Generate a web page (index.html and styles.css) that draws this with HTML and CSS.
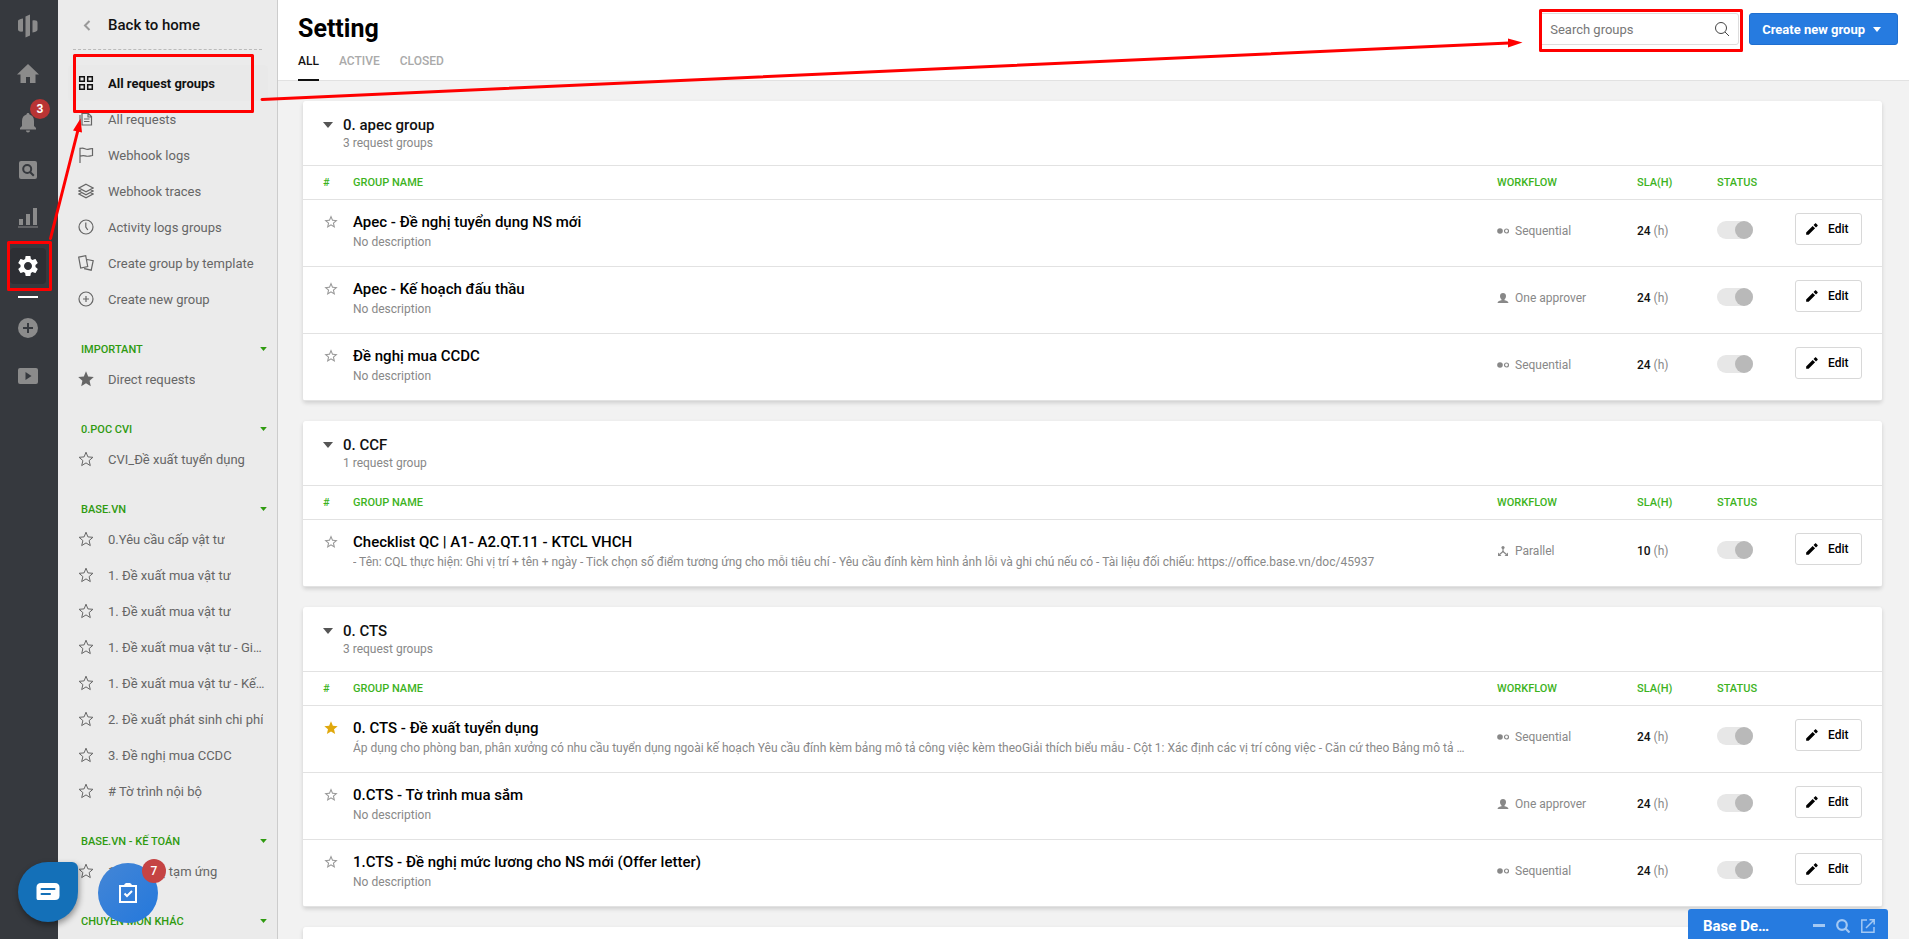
FILE: index.html
```html
<!DOCTYPE html>
<html lang="vi">
<head>
    <meta charset="UTF-8">
    <meta name="viewport" content="width=device-width, initial-scale=1.0">
    <title>Setting - Request groups</title>
    <link rel="stylesheet" href="styles.css">
</head>
<body>
    <!-- Icons -->
    <svg class="sprite" aria-hidden="true">
        <symbol id="i-star" viewBox="0 0 16 16"><path d="M8 1.2l1.9 4.7 5 .4-3.8 3.3 1.2 5L8 11.900l-4.300 2.700 1.200-5L1.100 6.300l5-.4z" fill="none" stroke="currentColor" stroke-width="1"/></symbol>
        <symbol id="i-star-fill" viewBox="0 0 16 16"><path d="M8 .3l2.200 5.200 5.600.5-4.200 3.700 1.200 5.500L8 12.300l-4.800 2.900 1.200-5.500L.2 6l5.600-.5z" fill="currentColor"/></symbol>
        <symbol id="i-star-sm" viewBox="0 0 24 24"><path d="M22 9.240l-7.190-.62L12 2 9.190 8.630 2 9.240l5.460 4.730L5.820 21 12 17.270 18.180 21l-1.630-7.030L22 9.240zM12 15.400l-3.760 2.270 1-4.280-3.320-2.880 4.380-.38L12 6.100l1.710 4.040 4.380.38-3.320 2.880 1 4.280L12 15.400z" fill="currentColor"/></symbol>
        <symbol id="i-star-sm-fill" viewBox="0 0 24 24"><path d="M12 17.270L18.180 21l-1.640-7.030L22 9.240l-7.190-.61L12 2 9.190 8.630 2 9.240l5.460 4.730L5.820 21z" fill="currentColor"/></symbol>
        <symbol id="i-caret" viewBox="0 0 10 6"><path d="M0 0h10L5 6z" fill="currentColor"/></symbol>
        <symbol id="i-pencil" viewBox="0 0 24 24"><path d="M2 17.800V22h4.200L17.300 10.900l-4.200-4.200zM21.500 6.700c.5-.5.5-1.200 0-1.700L19 2.500c-.5-.5-1.200-.5-1.700 0L14.600 5.200l4.200 4.200z" fill="currentColor"/></symbol>
        <symbol id="i-seq" viewBox="0 0 12 12"><circle cx="3" cy="6" r="2.800" fill="currentColor"/><circle cx="9.500" cy="6" r="2" fill="none" stroke="currentColor" stroke-width="1.200"/></symbol>
        <symbol id="i-one" viewBox="0 0 12 12"><path d="M6 1c1.800 0 3 1.200 3 3 0 1.500-.6 2.700-1.500 3.400v.8c1.500.4 3.800.9 4 2.800H.5c.2-1.900 2.500-2.400 4-2.800v-.8C3.600 6.700 3 5.500 3 4c0-1.800 1.200-3 3-3z" fill="currentColor"/></symbol>
        <symbol id="i-par" viewBox="0 0 12 12"><path d="M6 3v3.500M6 6.500L2.500 9.500M6 6.500l3.500 3" fill="none" stroke="currentColor" stroke-width="1.200"/><circle cx="6" cy="2.500" r="1.600" fill="currentColor"/><path d="M1 7.500V11h3.500zM11 7.500V11H7.500z" fill="currentColor"/></symbol>
    </svg>

    <div class="app">
        <!-- Dark rail -->
        <nav class="rail">
            <a href="#" aria-label="Base">
                <svg width="20" height="24" viewBox="0 0 20 24" fill="currentColor"><path d="M0 7.500c0-1.500 1-2.200 5-3v13c-3.500.5-5-.5-5-2zM7.500 2.500L12 .500v21l-4.500 2zM14.500 6.500c3.500-.5 5 .3 5 2v7c0 1.500-1.200 2.200-5 3z"/></svg>
            </a>
            <a href="#" aria-label="Home">
                <svg width="22" height="20" viewBox="0 0 22 20" fill="currentColor"><path d="M11 0l11 10.500h-3.500V19h-5.500v-6H9v6H3.500v-8.500H0z"/></svg>
            </a>
            <a href="#" aria-label="Notifications">
                <svg width="18" height="22" viewBox="0 0 18 22" fill="currentColor"><path d="M9 2c.9 0 1.500.7 1.500 1.600C13.500 4.400 15 6.800 15 10v5l2 2v1.500H1V17l2-2v-5c0-3.200 1.500-5.600 4.500-6.400C7.500 2.700 8.100 2 9 2zM7 19.500h4c0 1.200-.8 2-2 2s-2-.8-2-2z"/></svg>
                <span class="rail-badge">3</span>
            </a>
            <a href="#" aria-label="Search">
                <svg width="18" height="18" viewBox="0 0 18 18"><rect width="18" height="18" rx="2" fill="currentColor"/><circle cx="8.200" cy="8" r="4" fill="none" stroke="#36393e" stroke-width="2"/><path d="M11 11l3.800 3.800" stroke="#36393e" stroke-width="2"/></svg>
            </a>
            <a href="#" aria-label="Reports">
                <svg width="20" height="20" viewBox="0 0 20 20" fill="currentColor"><path d="M1 11h4v6H1zM8 6h4v11H8zM15 0h4v17h-4zM0 18.500h20v1H0z"/></svg>
            </a>
            <a href="#" class="rail-current" aria-label="Setting">
                <svg width="24" height="24" viewBox="0 0 24 24" fill="currentColor"><path d="M19.430 12.980c.04-.32.07-.64.07-.98s-.03-.66-.07-.98l2.110-1.650c.19-.15.24-.42.12-.64l-2-3.460c-.12-.22-.39-.3-.61-.22l-2.490 1c-.52-.4-1.080-.73-1.690-.98l-.38-2.650C14.460 2.180 14.250 2 14 2h-4c-.25 0-.46.18-.49.42l-.38 2.650c-.61.25-1.170.59-1.690.98l-2.490-1c-.23-.09-.49 0-.61.22l-2 3.460c-.13.22-.07.49.12.64l2.110 1.650c-.04.32-.07.65-.07.98s.03.66.07.98l-2.110 1.650c-.19.15-.24.42-.12.64l2 3.460c.12.22.39.3.61.22l2.490-1c.52.4 1.080.73 1.690.98l.38 2.650c.03.24.24.42.49.42h4c.25 0 .46-.18.49-.42l.38-2.650c.61-.25 1.170-.59 1.690-.98l2.490 1c.23.09.49 0 .61-.22l2-3.460c.12-.22.07-.49-.12-.64zM12 16c-2.210 0-4-1.790-4-4s1.790-4 4-4 4 1.790 4 4-1.790 4-4 4z"/></svg>
            </a>
            <hr class="rail-line">
            <a href="#" aria-label="Add">
                <svg width="20" height="20" viewBox="0 0 20 20"><circle cx="10" cy="10" r="10" fill="currentColor"/><path d="M10 5v10M5 10h10" stroke="#36393e" stroke-width="2"/></svg>
            </a>
            <a href="#" aria-label="Video">
                <svg width="20" height="16" viewBox="0 0 20 16"><rect width="20" height="16" rx="2" fill="currentColor"/><path d="M7.500 4l6 4-6 4z" fill="#36393e"/></svg>
            </a>
        </nav>

        <!-- Sidebar -->
        <aside class="sidebar">
            <a href="#" class="back">
                <svg width="16" height="16" viewBox="0 0 16 16" fill="none" stroke="currentColor" stroke-width="2"><path d="M10.500 4L6 8.500l4.500 4.500"/></svg>
                Back to home
            </a>
            <ul class="menu">
                <li><a href="#" class="active"><svg viewBox="0 0 16 16" fill="none" stroke="currentColor" stroke-width="1.500"><path d="M1.700 1.700h4.600v4.600H1.700zM9.700 1.700h4.600v4.600H9.700zM1.700 9.700h4.600v4.600H1.700zM9.700 9.700h4.600v4.600H9.700z"/></svg><span>All request groups</span></a></li>
                <li><a href="#"><svg viewBox="0 0 16 16" fill="none" stroke="currentColor" stroke-width="1.200"><path d="M4 2.500h6.500l3 3V14H4zM10 2.500V6h3.500M6 8h5.500M6 10.500h5.500M2 4v11.500"/></svg><span>All requests</span></a></li>
                <li><a href="#"><svg viewBox="0 0 16 16" fill="none" stroke="currentColor" stroke-width="1.200"><path d="M2 16V.8M2 1.500c4-1.600 5 1.200 8 .8 2-.3 3-.8 4.500-.8v7c-2 .2-3.500 1.200-6 .6-2.500-.7-4-.7-6.500 0"/></svg><span>Webhook logs</span></a></li>
                <li><a href="#"><svg viewBox="0 0 16 16" fill="none" stroke="currentColor" stroke-width="1.200"><path d="M8 1.200L15 5 8 8.800 1 5zM3.200 6.800L1 8l7 3.800L15 8l-2.200-1.200M3.200 9.800L1 11l7 3.800L15 11l-2.200-1.200"/></svg><span>Webhook traces</span></a></li>
                <li><a href="#"><svg viewBox="0 0 16 16" fill="none" stroke="currentColor" stroke-width="1.200"><circle cx="8" cy="8" r="7"/><path d="M7.800 3.500V8l2 3"/></svg><span>Activity logs groups</span></a></li>
                <li><a href="#"><svg viewBox="0 0 16 16" fill="none" stroke="currentColor" stroke-width="1.200"><path d="M.7 2.200L7.700.7 9.700 11.500 2.700 13zM9 4.500l6.200 1.200-2 9.500-6.500-1.500.3-1.500"/></svg><span>Create group by template</span></a></li>
                <li><a href="#"><svg viewBox="0 0 16 16" fill="none" stroke="currentColor" stroke-width="1.200"><circle cx="8" cy="8" r="7"/><path d="M8 5v6M5 8h6"/></svg><span>Create new group</span></a></li>
            </ul>

            <h4 class="menu-title">IMPORTANT <svg><use href="#i-caret"/></svg></h4>
            <ul class="menu">
                <li><a href="#"><svg><use href="#i-star-fill"/></svg><span>Direct requests</span></a></li>
            </ul>

            <h4 class="menu-title">0.POC CVI <svg><use href="#i-caret"/></svg></h4>
            <ul class="menu">
                <li><a href="#"><svg><use href="#i-star"/></svg><span>CVI_Đề xuất tuyển dụng</span></a></li>
            </ul>

            <h4 class="menu-title">BASE.VN <svg><use href="#i-caret"/></svg></h4>
            <ul class="menu">
                <li><a href="#"><svg><use href="#i-star"/></svg><span>0.Yêu cầu cấp vật tư</span></a></li>
                <li><a href="#"><svg><use href="#i-star"/></svg><span>1. Đề xuất mua vật tư</span></a></li>
                <li><a href="#"><svg><use href="#i-star"/></svg><span>1. Đề xuất mua vật tư</span></a></li>
                <li><a href="#"><svg><use href="#i-star"/></svg><span>1. Đề xuất mua vật tư - Gia công</span></a></li>
                <li><a href="#"><svg><use href="#i-star"/></svg><span>1. Đề xuất mua vật tư - Kế hoạch</span></a></li>
                <li><a href="#"><svg><use href="#i-star"/></svg><span>2. Đề xuất phát sinh chi phí</span></a></li>
                <li><a href="#"><svg><use href="#i-star"/></svg><span>3. Đề nghị mua CCDC</span></a></li>
                <li><a href="#"><svg><use href="#i-star"/></svg><span># Tờ trình nội bộ</span></a></li>
            </ul>

            <h4 class="menu-title">BASE.VN - KẾ TOÁN <svg><use href="#i-caret"/></svg></h4>
            <ul class="menu">
                <li><a href="#"><svg><use href="#i-star"/></svg><span>1. Đề nghị tạm ứng</span></a></li>
            </ul>

            <h4 class="menu-title">CHUYÊN MÔN KHÁC <svg><use href="#i-caret"/></svg></h4>
        </aside>

        <!-- Content -->
        <main class="main">
            <header class="topbar">
                <div>
                    <h1>Setting</h1>
                    <div class="tabs">
                        <a href="#" class="active">ALL</a>
                        <a href="#">ACTIVE</a>
                        <a href="#">CLOSED</a>
                    </div>
                </div>
                <div class="actions">
                    <label class="search">
                        <input type="text" placeholder="Search groups" aria-label="Search groups">
                        <svg width="16" height="16" viewBox="0 0 16 16" fill="none" stroke="#444"><circle cx="7" cy="7" r="5.500"/><path d="M11 11l4 4"/></svg>
                    </label>
                    <button class="btn-create">Create new group <svg width="8" height="5"><use href="#i-caret"/></svg></button>
                </div>
            </header>

            <div class="groups">
                <section class="card">
                    <div class="card-head">
                        <svg><use href="#i-caret"/></svg>
                        <div>
                            <h2>0. apec group</h2>
                            <p>3 request groups</p>
                        </div>
                    </div>
                    <table>
                        <thead>
                            <tr><th class="c-star">#</th><th class="c-name">GROUP NAME</th><th class="c-flow">WORKFLOW</th><th class="c-sla">SLA(H)</th><th class="c-status">STATUS</th><th class="c-edit"></th></tr>
                        </thead>
                        <tbody>
                            <tr>
                                <td class="c-star"><svg><use href="#i-star-sm"/></svg></td>
                                <td class="c-name"><h3>Apec - Đề nghị tuyển dụng NS mới</h3><p>No description</p></td>
                                <td class="c-flow"><span><svg><use href="#i-seq"/></svg>Sequential</span></td>
                                <td class="c-sla"><b>24</b> (h)</td>
                                <td class="c-status"><input type="checkbox" class="toggle" aria-label="Status" checked></td>
                                <td class="c-edit"><button class="btn-edit"><svg><use href="#i-pencil"/></svg>Edit</button></td>
                            </tr>
                            <tr>
                                <td class="c-star"><svg><use href="#i-star-sm"/></svg></td>
                                <td class="c-name"><h3>Apec - Kế hoạch đấu thầu</h3><p>No description</p></td>
                                <td class="c-flow"><span><svg><use href="#i-one"/></svg>One approver</span></td>
                                <td class="c-sla"><b>24</b> (h)</td>
                                <td class="c-status"><input type="checkbox" class="toggle" aria-label="Status" checked></td>
                                <td class="c-edit"><button class="btn-edit"><svg><use href="#i-pencil"/></svg>Edit</button></td>
                            </tr>
                            <tr>
                                <td class="c-star"><svg><use href="#i-star-sm"/></svg></td>
                                <td class="c-name"><h3>Đề nghị mua CCDC</h3><p>No description</p></td>
                                <td class="c-flow"><span><svg><use href="#i-seq"/></svg>Sequential</span></td>
                                <td class="c-sla"><b>24</b> (h)</td>
                                <td class="c-status"><input type="checkbox" class="toggle" aria-label="Status" checked></td>
                                <td class="c-edit"><button class="btn-edit"><svg><use href="#i-pencil"/></svg>Edit</button></td>
                            </tr>
                        </tbody>
                    </table>
                </section>

                <section class="card">
                    <div class="card-head">
                        <svg><use href="#i-caret"/></svg>
                        <div>
                            <h2>0. CCF</h2>
                            <p>1 request group</p>
                        </div>
                    </div>
                    <table>
                        <thead>
                            <tr><th class="c-star">#</th><th class="c-name">GROUP NAME</th><th class="c-flow">WORKFLOW</th><th class="c-sla">SLA(H)</th><th class="c-status">STATUS</th><th class="c-edit"></th></tr>
                        </thead>
                        <tbody>
                            <tr>
                                <td class="c-star"><svg><use href="#i-star-sm"/></svg></td>
                                <td class="c-name"><h3>Checklist QC | A1- A2.QT.11 - KTCL VHCH</h3><p>- Tên: CQL thực hiện: Ghi vị trí + tên + ngày - Tick chọn số điểm tương ứng cho mỗi tiêu chí - Yêu cầu đính kèm hình ảnh lỗi và ghi chú nếu có - Tài liệu đối chiếu: https://office.base.vn/doc/45937</p></td>
                                <td class="c-flow"><span><svg><use href="#i-par"/></svg>Parallel</span></td>
                                <td class="c-sla"><b>10</b> (h)</td>
                                <td class="c-status"><input type="checkbox" class="toggle" aria-label="Status" checked></td>
                                <td class="c-edit"><button class="btn-edit"><svg><use href="#i-pencil"/></svg>Edit</button></td>
                            </tr>
                        </tbody>
                    </table>
                </section>

                <section class="card">
                    <div class="card-head">
                        <svg><use href="#i-caret"/></svg>
                        <div>
                            <h2>0. CTS</h2>
                            <p>3 request groups</p>
                        </div>
                    </div>
                    <table>
                        <thead>
                            <tr><th class="c-star">#</th><th class="c-name">GROUP NAME</th><th class="c-flow">WORKFLOW</th><th class="c-sla">SLA(H)</th><th class="c-status">STATUS</th><th class="c-edit"></th></tr>
                        </thead>
                        <tbody>
                            <tr>
                                <td class="c-star starred"><svg><use href="#i-star-sm-fill"/></svg></td>
                                <td class="c-name"><h3>0. CTS - Đề xuất tuyển dụng</h3><p>Áp dụng cho phòng ban, phân xưởng có nhu cầu tuyển dụng ngoài kế hoạch Yêu cầu đính kèm bảng mô tả công việc kèm theoGiải thích biểu mẫu - Cột 1: Xác định các vị trí công việc - Căn cứ theo Bảng mô tả công việc</p></td>
                                <td class="c-flow"><span><svg><use href="#i-seq"/></svg>Sequential</span></td>
                                <td class="c-sla"><b>24</b> (h)</td>
                                <td class="c-status"><input type="checkbox" class="toggle" aria-label="Status" checked></td>
                                <td class="c-edit"><button class="btn-edit"><svg><use href="#i-pencil"/></svg>Edit</button></td>
                            </tr>
                            <tr>
                                <td class="c-star"><svg><use href="#i-star-sm"/></svg></td>
                                <td class="c-name"><h3>0.CTS - Tờ trình mua sắm</h3><p>No description</p></td>
                                <td class="c-flow"><span><svg><use href="#i-one"/></svg>One approver</span></td>
                                <td class="c-sla"><b>24</b> (h)</td>
                                <td class="c-status"><input type="checkbox" class="toggle" aria-label="Status" checked></td>
                                <td class="c-edit"><button class="btn-edit"><svg><use href="#i-pencil"/></svg>Edit</button></td>
                            </tr>
                            <tr>
                                <td class="c-star"><svg><use href="#i-star-sm"/></svg></td>
                                <td class="c-name"><h3>1.CTS - Đề nghị mức lương cho NS mới (Offer letter)</h3><p>No description</p></td>
                                <td class="c-flow"><span><svg><use href="#i-seq"/></svg>Sequential</span></td>
                                <td class="c-sla"><b>24</b> (h)</td>
                                <td class="c-status"><input type="checkbox" class="toggle" aria-label="Status" checked></td>
                                <td class="c-edit"><button class="btn-edit"><svg><use href="#i-pencil"/></svg>Edit</button></td>
                            </tr>
                        </tbody>
                    </table>
                </section>

                <section class="card card-empty"></section>
            </div>
        </main>
    </div>

    <!-- Floating buttons -->
    <button class="fab-chat" aria-label="Chat">
        <svg width="24" height="18" viewBox="0 0 24 18"><path d="M5 0h14c3 0 4.500 1.500 4.500 4.500v8c0 3-1.500 4.500-4.500 4.500H2.500C1 17 .5 16.500.5 15V4.500C.5 1.500 2 0 5 0z" fill="#fff"/><path d="M5.500 6h13M5.500 11h8.500" stroke="#1470b8" stroke-width="2" stroke-linecap="round"/></svg>
    </button>
    <button class="fab-task" aria-label="Tasks">
        <svg width="18" height="20" viewBox="0 0 18 20" fill="none" stroke="#fff" stroke-width="2"><path d="M1 3h16v16H1zM5.500 10.500l2.500 2.500 5-5"/><path d="M6 3c0-3 6-3 6 0" fill="#fff"/></svg>
        <span class="fab-badge">7</span>
    </button>
    <div class="chatbar">
        <strong>Base De…</strong>
        <button aria-label="Minimize"><svg width="12" height="14" viewBox="0 0 12 14" stroke="currentColor" stroke-width="3"><path d="M0 6.500h12"/></svg></button>
        <button aria-label="Search"><svg width="14" height="14" viewBox="0 0 14 14" fill="none" stroke="currentColor" stroke-width="2.200"><circle cx="6" cy="6" r="4.800"/><path d="M9.500 9.500l4 4"/></svg></button>
        <button aria-label="Open"><svg width="14" height="14" viewBox="0 0 14 14" fill="none" stroke="currentColor" stroke-width="1.500"><path d="M6 1H.8v12.200H13V8M5 9l7.500-7.500M8.500.8h4.700v4.700"/></svg></button>
    </div>

    <!-- Guide marks: setting > all request groups > search -->
    <svg class="marks" aria-hidden="true">
        <g fill="none" stroke="#f00" stroke-width="3" stroke-linejoin="round">
            <rect x="74.500" y="55.500" width="178" height="56"/>
            <rect x="8.500" y="242.500" width="42" height="47"/>
            <rect x="1540.500" y="10.500" width="201" height="40"/>
            <path d="M50.500 238.500L78 130M262 99.500L1509 43" stroke-linecap="round"/>
        </g>
        <path d="M80.500 118.500L82 132.500 73 130.500zM1522.500 42.500L1508 38.500V47.500z" fill="#f00"/>
    </svg>
</body>
</html>
```
FILE: styles.css
```css
* {
    box-sizing: border-box;
}

body {
    margin: 0;
    font-family: Roboto, "Liberation Sans", sans-serif;
    font-size: 13px;
    color: #111;
    background-color: #f2f2f2;
}

h1, h2, h3, h4, p, ul {
    margin: 0;
    padding: 0;
    font-weight: 500;
}

ul {
    list-style: none;
}

a {
    color: inherit;
    text-decoration: none;
}

button {
    font-family: inherit;
    cursor: pointer;
}

.sprite {
    display: none;
}

.app {
    display: flex;
    height: 100vh;
    overflow: hidden;
}

/* Rail */
.rail {
    display: flex;
    flex: 0 0 58px;
    flex-direction: column;
    padding: 2px 2px 0 0;
    background-color: #36393e;
    color: #8b8b8b;
}

.rail a {
    position: relative;
    display: flex;
    align-items: center;
    justify-content: center;
    height: 48px;
}

.rail-badge {
    position: absolute;
    top: 1px;
    left: 30px;
    width: 20px;
    border-radius: 10px;
    background-color: #b93434;
    color: #fff;
    font-size: 12px;
    font-weight: 700;
    line-height: 20px;
    text-align: center;
}

.rail .rail-current {
    width: 36px;
    height: 36px;
    margin: 6px auto;
    border-radius: 4px;
    background-color: #2d2f34;
    color: #fff;
}

.rail-line {
    width: 20px;
    height: 2px;
    margin: 6px auto;
    border: 0;
    background-color: #fff;
}

/* Sidebar */
.sidebar {
    flex: 0 0 220px;
    padding: 0 9px 0 10px;
    overflow: hidden;
    border-right: 1px solid #ccc;
    background-color: #ebebeb;
}

.back {
    display: flex;
    align-items: center;
    gap: 13px;
    height: 50px;
    margin: 0 6px 15px 5px;
    padding-left: 6px;
    border-bottom: 1px dashed #bbb;
    font-size: 15px;
    font-weight: 500;
}

.back svg {
    color: #999;
}

.menu a {
    display: flex;
    align-items: center;
    gap: 14px;
    height: 36px;
    padding: 0 3px 0 10px;
    border-radius: 4px;
    color: #666;
    font-weight: 400;
}

.menu svg {
    flex: none;
    width: 16px;
    height: 16px;
}

.menu span {
    padding-top: 2px;
    overflow: hidden;
    line-height: 20px;
    text-overflow: ellipsis;
    white-space: nowrap;
}

.menu .active {
    background-color: #e9e9e9;
    color: #111;
    font-weight: 700;
}

.menu-title {
    display: flex;
    align-items: center;
    justify-content: space-between;
    height: 24px;
    margin-top: 20px;
    padding: 0 1px 0 13px;
    color: #2f9a10;
    font-size: 11px;
}

.menu-title svg {
    width: 7px;
    height: 4px;
}

/* Top bar */
.main {
    flex: 1;
    min-width: 0;
    overflow: hidden;
}

.topbar {
    display: flex;
    justify-content: space-between;
    height: 81px;
    padding: 13px 11px 0 20px;
    border-bottom: 1px solid #e2e2e2;
    background-color: #fff;
}

h1 {
    height: 35px;
    color: #000;
    font-size: 25px;
    font-weight: 700;
    line-height: 32px;
}

.tabs {
    display: flex;
    gap: 20px;
    color: #aaa;
    font-size: 12px;
    font-weight: 500;
}

.tabs a {
    height: 33px;
    line-height: 26px;
}

.tabs .active {
    border-bottom: 2px solid #111;
    color: #111;
}

.actions {
    display: flex;
    gap: 10px;
}

.search {
    display: flex;
    align-items: center;
    width: 200px;
    height: 32px;
    padding: 0 8px 0 10px;
    border: 1px solid #ddd;
    border-radius: 3px;
}

.search input {
    flex: 1;
    min-width: 0;
    padding: 0;
    border: 0;
    outline: 0;
    font-family: inherit;
    font-size: 13px;
}

.search input::placeholder {
    color: #777;
}

.btn-create {
    display: flex;
    align-items: center;
    gap: 8px;
    height: 32px;
    padding: 0 16px 0 12px;
    border: 1px solid #1f6fd0;
    border-radius: 3px;
    background-color: #267be0;
    color: #fff;
    font-size: 13px;
    font-weight: 700;
}

/* Group cards */
.groups {
    padding: 20px 27px 0 25px;
}

.card {
    margin-bottom: 20px;
    border-radius: 3px;
    background-color: #fff;
    box-shadow: 0 2px 4px rgba(0, 0, 0, 0.15);
}

.card-empty {
    height: 65px;
}

.card-head {
    display: flex;
    gap: 10px;
    height: 65px;
    padding: 14px 20px;
    border-bottom: 1px solid #e2e2e2;
}

.card-head svg {
    width: 10px;
    height: 6px;
    margin-top: 7px;
    color: #555;
}

h2 {
    margin-bottom: 1px;
    font-size: 15px;
    line-height: 20px;
}

.card p {
    overflow: hidden;
    color: #888;
    font-size: 12px;
    font-weight: 400;
    text-overflow: ellipsis;
    white-space: nowrap;
}

.card table {
    width: 100%;
    border-spacing: 0;
    table-layout: fixed;
}

th {
    height: 34px;
    padding: 0;
    border-bottom: 1px solid #e2e2e2;
    color: #3db31e;
    font-size: 11px;
    font-weight: 500;
    text-align: left;
}

td {
    height: 67px;
    padding: 21px 0 0;
    border-bottom: 1px solid #e2e2e2;
    color: #888;
    font-size: 12px;
    line-height: 20px;
    vertical-align: top;
}

.c-star {
    width: 50px;
    padding-left: 20px;
}

td.c-star {
    padding-top: 14px;
}

.c-star svg {
    display: block;
    width: 16px;
    height: 16px;
    color: #999;
}

.starred svg {
    color: #e0a80c;
}

td.c-name {
    padding: 12px 30px 0 0;
}

h3 {
    color: #000;
    font-size: 15px;
    line-height: 20px;
}

.c-flow {
    width: 140px;
}

.c-flow span {
    display: flex;
    align-items: center;
    gap: 6px;
}

.c-flow svg {
    width: 12px;
    height: 12px;
}

.c-sla {
    width: 80px;
}

.c-sla b {
    color: #111;
    font-weight: 500;
}

.c-status {
    width: 78px;
}

.toggle {
    display: block;
    width: 36px;
    height: 18px;
    margin: 0;
    border-radius: 9px;
    background-color: #e7e7e7;
    appearance: none;
    cursor: pointer;
}

.toggle::before {
    content: "";
    display: block;
    width: 18px;
    height: 18px;
    border-radius: 9px;
    background-color: #b9b9b9;
}

.toggle:checked::before {
    margin-left: 18px;
}

.c-edit {
    width: 87px;
}

td.c-edit {
    padding-top: 13px;
}

.btn-edit {
    display: flex;
    align-items: center;
    gap: 9px;
    width: 67px;
    height: 32px;
    padding: 0 0 0 9px;
    border: 1px solid #d8d8d8;
    border-radius: 3px;
    background-color: #fff;
    color: #000;
    font-size: 12px;
    font-weight: 500;
}

.btn-edit svg {
    width: 14px;
    height: 14px;
}

/* Floating widgets */
.fab-chat,
.fab-task {
    position: fixed;
    display: flex;
    align-items: center;
    justify-content: center;
    width: 60px;
    height: 60px;
    padding: 0;
    border: 0;
}

.fab-chat {
    bottom: 17px;
    left: 18px;
    border-radius: 30px 6px 30px 30px;
    background-color: #1470b8;
    box-shadow: 1px 3px 6px rgba(0, 0, 0, 0.4);
}

.fab-task {
    bottom: 16px;
    left: 98px;
    border-radius: 50%;
    background: linear-gradient(135deg, #4486d6, #2478dc);
}

.fab-badge {
    position: absolute;
    top: -4px;
    right: -8px;
    width: 24px;
    border-radius: 12px;
    background-color: #c54343;
    color: #fff;
    font-size: 12px;
    font-weight: 500;
    line-height: 24px;
}

.chatbar {
    position: fixed;
    right: 21px;
    bottom: 0;
    display: flex;
    align-items: center;
    gap: 11px;
    width: 200px;
    height: 30px;
    padding: 3px 13px 0 15px;
    border-radius: 3px 3px 0 0;
    background-color: #267be0;
    color: #fff;
    font-size: 15px;
}

.chatbar strong {
    flex: 1;
}

.chatbar button {
    display: flex;
    padding: 0;
    border: 0;
    background: none;
    color: #a3c8f3;
}

.marks {
    position: fixed;
    top: 0;
    left: 0;
    width: 100%;
    height: 100%;
    pointer-events: none;
}
```
